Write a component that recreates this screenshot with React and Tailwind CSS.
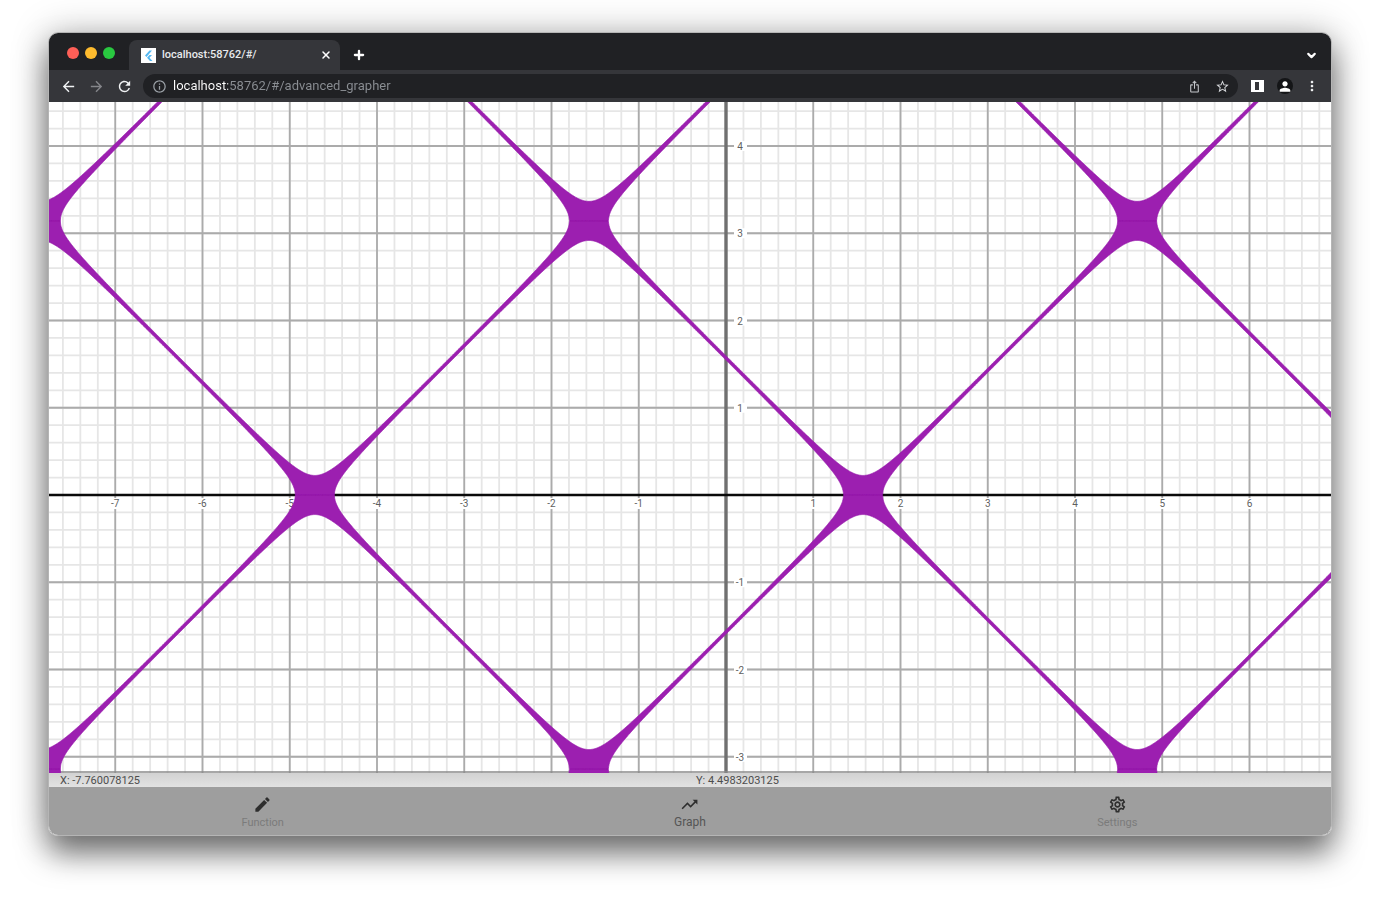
import { ChevronDown, Plus, X } from "lucide-react";
import {
  MdArrowBack,
  MdArrowForward,
  MdEdit,
  MdInfoOutline,
  MdIosShare,
  MdMoreVert,
  MdOutlineSettings,
  MdPerson,
  MdRefresh,
  MdStarBorder,
  MdTrendingUp,
} from "react-icons/md";

// Plot area in svg units, UNIT is one step on either axis
const WIDTH = 1282;
const HEIGHT = 671;
const UNIT = 87.25;
const ORIGIN_X = 677;
const ORIGIN_Y = 393;
const TOLERANCE = 0.025;

const toX = (x) => ORIGIN_X + x * UNIT;
const toY = (y) => ORIGIN_Y - y * UNIT;

const range = (from, to) =>
  Array.from({ length: to - from + 1 }, (_, i) => from + i);

// Area where |sin(x) - cos(y)| is below the tolerance, one branch of acos
function bandPath(sign, period) {
  const upper = [];
  const lower = [];
  const offset = period * 2 * Math.PI;
  for (let x = -7.8; x <= 7; x += 0.005) {
    const s = Math.sin(x);
    const near = Math.acos(Math.min(1, s + TOLERANCE));
    const far = Math.acos(Math.max(-1, s - TOLERANCE));
    const px = toX(x).toFixed(2);
    upper.push(`${px},${toY(sign * far + offset).toFixed(2)}`);
    lower.push(`${px},${toY(sign * near + offset).toFixed(2)}`);
  }
  return `M${upper.join("L")}L${lower.reverse().join("L")}Z`;
}

const curve = [
  [1, 0],
  [-1, 0],
  [-1, 1],
  [1, -1],
]
  .map(([sign, period]) => bandPath(sign, period))
  .join("");

function Graph() {
  const xLabels = range(-7, 6).filter((n) => n !== 0);
  const yLabels = range(-3, 4).filter((n) => n !== 0);

  return (
    <svg
      viewBox={`0 0 ${WIDTH} ${HEIGHT}`}
      className="block w-full bg-white"
      role="img"
      aria-label="Graph"
    >
      <g stroke="#e6e6e6" strokeWidth="1.8">
        {range(-38, 34).map((n) => (
          <line key={`v${n}`} x1={toX(n / 5)} x2={toX(n / 5)} y1="0" y2={HEIGHT} />
        ))}
        {range(-15, 22).map((n) => (
          <line key={`h${n}`} x1="0" x2={WIDTH} y1={toY(n / 5)} y2={toY(n / 5)} />
        ))}
      </g>
      <g stroke="#ababab" strokeWidth="1.8">
        {range(-7, 6).map((n) => (
          <line key={`v${n}`} x1={toX(n)} x2={toX(n)} y1="0" y2={HEIGHT} />
        ))}
        {range(-3, 4).map((n) => (
          <line key={`h${n}`} x1="0" x2={WIDTH} y1={toY(n)} y2={toY(n)} />
        ))}
      </g>
      <line x1={ORIGIN_X} x2={ORIGIN_X} y1="0" y2={HEIGHT} stroke="#707070" strokeWidth="3.4" />
      <line x1="0" x2={WIDTH} y1={ORIGIN_Y} y2={ORIGIN_Y} stroke="#0a0a0a" strokeWidth="2.6" />
      <g
        fill="#5f5f5f"
        fontSize="10"
        textAnchor="middle"
        className="font-['Roboto',sans-serif]"
      >
        {xLabels.map((n) => (
          <g key={`x${n}`}>
            <rect x={toX(n) - 5} y={ORIGIN_Y + 3} width="10" height="11" fill="#ffffff" />
            <text x={toX(n)} y={ORIGIN_Y + 12}>{n}</text>
          </g>
        ))}
        {yLabels.map((n) => (
          <g key={`y${n}`}>
            <rect x={ORIGIN_X + 8} y={toY(n) - 5} width="13" height="10" fill="#ffffff" />
            <text x={ORIGIN_X + 14} y={toY(n) + 4}>{n}</text>
          </g>
        ))}
      </g>
      <line x1="0" x2={WIDTH} y1={HEIGHT - 1} y2={HEIGHT - 1} stroke="#8a8a8a" strokeWidth="1.5" />
      <path d={curve} fill="#9c1fb0" stroke="#961aaa" strokeWidth="0.7" />
    </svg>
  );
}

function TabStrip() {
  return (
    <div className="flex h-[37px] items-end bg-[#202124]">
      <div className="flex h-full w-20 items-center gap-[6px] pl-[18px] pt-[3px]">
        <button aria-label="Close window" className="h-3 w-3 rounded-full bg-[#fe5f57]" />
        <button aria-label="Minimize window" className="h-3 w-3 rounded-full bg-[#febb2e]" />
        <button aria-label="Zoom window" className="h-3 w-3 rounded-full bg-[#29c840]" />
      </div>
      <div className="flex h-[30px] w-[211px] items-center rounded-t-lg bg-[#35363a] pl-3 pr-2">
        <svg viewBox="0 0 15 15" className="h-[15px] w-[15px] bg-white">
          <path d="M8.500 2.500 4 7.500 5.500 9 11 2.500ZM8.500 7 6 9.700l3 3.300h2.500L8.500 9.700 11 7Z" fill="#54b8f2" />
        </svg>
        <span className="ml-[6px] flex-1 text-[11px] font-medium leading-4 text-[#e8eaed]">
          localhost:58762/#/
        </span>
        <button aria-label="Close tab" className="text-white">
          <X size={12} strokeWidth={3} />
        </button>
      </div>
      <button aria-label="New tab" className="ml-3 flex h-[30px] items-center text-white">
        <Plus size={14} strokeWidth={4} />
      </button>
      <button aria-label="Search tabs" className="ml-auto mr-[13px] flex h-[30px] items-center text-white">
        <ChevronDown size={13} strokeWidth={4} />
      </button>
    </div>
  );
}

function Toolbar() {
  return (
    <div className="flex h-8 items-center bg-[#35363a] pl-[11px] text-[#f1f3f4]">
      <button aria-label="Back"><MdArrowBack size={17} /></button>
      <button aria-label="Forward" className="ml-[11px] text-[#85868a]"><MdArrowForward size={17} /></button>
      <button aria-label="Reload" className="ml-[11px]"><MdRefresh size={17} /></button>
      <div className="ml-[10px] flex h-6 flex-1 items-center rounded-full bg-[#202124] pl-[9px] pr-2">
        <MdInfoOutline size={15} className="text-[#9aa0a6]" />
        <input
          aria-label="Address"
          defaultValue="localhost:58762/#/advanced_grapher"
          className="ml-[6px] min-w-0 flex-1 bg-linear-to-r from-white from-[55px] to-[#8b8f94] to-[55px] bg-clip-text text-[13px] leading-5 text-transparent outline-none"
        />
        <button aria-label="Share" className="text-[#c4c7cb]"><MdIosShare size={13} /></button>
        <button aria-label="Bookmark" className="ml-[14px] text-[#d5d7da]"><MdStarBorder size={15} /></button>
      </div>
      <button aria-label="Side panel" className="ml-3">
        <svg viewBox="0 0 15 14" className="h-[14px] w-[15px]">
          <path d="M1 1h13v12H1ZM5 3v8h4V3Z" fill="#ffffff" fillRule="evenodd" />
        </svg>
      </button>
      <button
        aria-label="Profile"
        className="ml-3 flex h-4 w-4 items-center justify-center rounded-full bg-[#141517] text-white"
      >
        <MdPerson size={17} />
      </button>
      <button aria-label="Menu" className="mx-[11px]"><MdMoreVert size={16} /></button>
    </div>
  );
}

const navItems = [
  { label: "Function", icon: MdEdit, active: false },
  { label: "Graph", icon: MdTrendingUp, active: true },
  { label: "Settings", icon: MdOutlineSettings, active: false },
];

function BottomNav() {
  return (
    <nav className="grid h-12 grid-cols-3 bg-[#9e9e9e]">
      {navItems.map(({ label, icon: Icon, active }) => (
        <button key={label} className="flex flex-col items-center pt-2 text-[#2e2e2e]">
          <Icon size={19} />
          <span
            className={
              active
                ? "text-[12px] leading-4 text-[#555555]"
                : "text-[11px] leading-[18px] text-[#7b7b7b]"
            }
          >
            {label}
          </span>
        </button>
      ))}
    </nav>
  );
}

export default function App() {
  return (
    <main className="min-h-screen bg-white px-12 pb-16 pt-8 font-['Roboto',sans-serif]">
      <div className="rounded-[10px] shadow-[0_18px_30px_rgba(0,0,0,0.5),0_0_36px_rgba(0,0,0,0.25)]">
        <div className="overflow-hidden rounded-[10px] border border-[#b5b5b5]">
          <TabStrip />
          <Toolbar />
          <Graph />
          <div className="grid h-[14px] grid-cols-2 bg-linear-to-b from-[#d2d2d2] to-[#e2e2e2] text-[11px] leading-[15px] text-[#4d4d4d]">
            <span className="pl-[11px]">X: -7.760078125</span>
            <span className="pl-[6px]">Y: 4.4983203125</span>
          </div>
          <BottomNav />
        </div>
      </div>
    </main>
  );
}
